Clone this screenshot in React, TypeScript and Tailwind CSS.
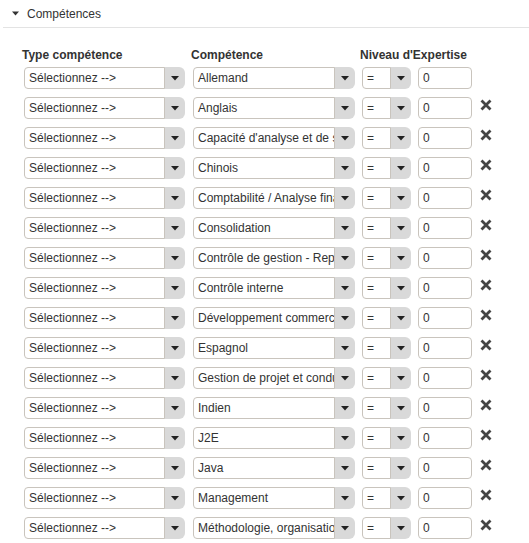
const ROWS = [
  'Allemand',
  'Anglais',
  "Capacité d'analyse et de synthèse",
  'Chinois',
  'Comptabilité / Analyse financière',
  'Consolidation',
  'Contrôle de gestion - Reporting',
  'Contrôle interne',
  'Développement commercial',
  'Espagnol',
  'Gestion de projet et conduite du changement',
  'Indien',
  'J2E',
  'Java',
  'Management',
  'Méthodologie, organisation',
]

function Caret() {
  return (
    <svg width="8" height="5" viewBox="0 0 8 5" aria-hidden>
      <path d="M0 0h8L4 4.5z" fill="#222" />
    </svg>
  )
}

function FakeSelect({ value, width }: { value: string; width: string }) {
  return (
    <div className={`flex h-[22px] shrink-0 rounded-[6px] bg-[#d9d9d9] ${width}`}>
      <div className="flex min-w-0 flex-1 items-center overflow-hidden whitespace-nowrap rounded-l-[4px] border border-[#c9c4bd] bg-white pl-[4px] text-[12px] text-[#333]">
        {value}
      </div>
      <div className="flex w-[20px] shrink-0 items-center justify-center">
        <Caret />
      </div>
    </div>
  )
}

function Cross() {
  return (
    <svg width="12" height="12" viewBox="0 0 12 12" aria-hidden>
      <path d="M1.5 1.5l9 9M10.5 1.5l-9 9" stroke="#444" strokeWidth="2.8" />
    </svg>
  )
}

export default function App() {
  return (
    <div
      className="h-[543px] w-[529px] overflow-hidden bg-white text-[#333]"
      style={{ fontFamily: '"Liberation Sans", Arial, sans-serif' }}>
      <div className="ml-[3px] flex h-[28px] items-center border-b border-[#e3e3e3] pl-[9px]">
        <svg width="7" height="5" viewBox="0 0 7 5" aria-hidden>
          <path d="M0 0.5h7L3.5 4.5z" fill="#333" />
        </svg>
        <span className="ml-[8px] text-[12px] text-[#333]">Compétences</span>
      </div>

      <div className="pl-[22px] pt-[20px]">
        <div className="flex h-[14px] items-center text-[12px] font-bold text-[#333]">
          <span className="w-[169px]">Type compétence</span>
          <span className="w-[169px]">Compétence</span>
          <span>Niveau d'Expertise</span>
        </div>
        <div className="mt-[5px] flex flex-col gap-[8px]">
          {ROWS.map((r, i) => (
            <div key={r} className="flex items-center">
              <div className="ml-[2px]">
                <FakeSelect value="Sélectionnez -->" width="w-[161px]" />
              </div>
              <div className="ml-[8px]">
                <FakeSelect value={r} width="w-[162px]" />
              </div>
              <div className="ml-[7px]">
                <FakeSelect value="=" width="w-[49px]" />
              </div>
              <div className="ml-[7px] flex h-[22px] w-[54px] items-center rounded-[4px] border border-[#c9c4bd] bg-white pl-[4px] text-[12px] text-[#333]">
                0
              </div>
              {i > 0 && (
                <div className="-mt-[6px] ml-[8px]">
                  <Cross />
                </div>
              )}
            </div>
          ))}
        </div>
      </div>
    </div>
  )
}
